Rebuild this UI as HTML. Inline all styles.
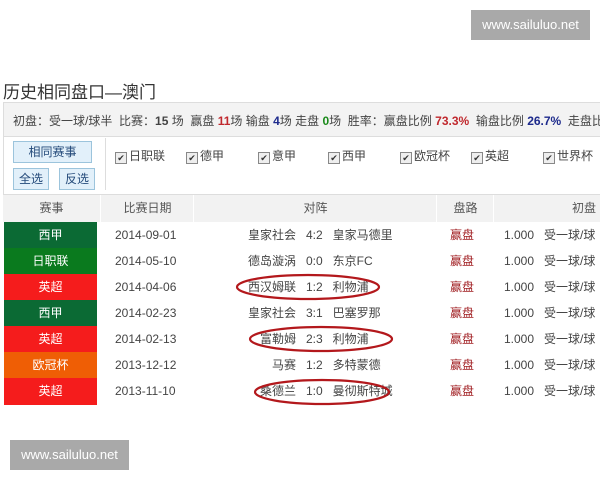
<!DOCTYPE html>
<html><head><meta charset="utf-8"><style>
body{margin:0;width:600px;height:480px;background:#fff;position:relative;overflow:hidden;font-family:"Liberation Sans","Noto Sans CJK SC",sans-serif;font-size:12px;color:#444}
.a{position:absolute;white-space:nowrap}
.wm{position:absolute;background:#a9a9a9;color:#fff;font-size:13px;line-height:30px;text-align:center;width:119px;height:30px}
.btn{position:absolute;border:1px solid #9cc4dc;background:#e2f0fa;color:#244a7a;text-align:center;line-height:20px;box-sizing:border-box}
.cb{position:absolute;top:147px;font-size:12px}
.cb i{display:inline-block;width:10px;height:10px;border:1px solid #888;background:#eee;vertical-align:-1px;margin-right:2px;font-style:normal;font-size:9px;line-height:10px;text-align:center;color:#333}
.row{position:absolute;left:3px;width:597px;height:26px;border-bottom:1px solid #e4e4e4;background:#fff}
.lg{position:absolute;left:1px;top:0;width:93px;height:26px;color:#fff;text-align:center;line-height:26px;font-weight:normal}
.c{position:absolute;top:0;line-height:26px}
</style></head><body>
<div class="a" style="left:3px;top:78px;font-size:17px;color:#333">历史相同盘口—澳门</div>
<div class="a" style="left:3px;top:102px;width:597px;height:33px;background:#f3f3f3;border-top:1px solid #ddd;border-left:1px solid #ddd;border-bottom:1px solid #ddd"></div>
<div class="a" style="left:13px;top:112px">初盘：受一球/球半 &nbsp;比赛：<b>15</b> 场 &nbsp;赢盘 <b style="color:#c0282d">11</b>场 输盘 <b style="color:#1d2a8c">4</b>场 走盘 <b style="color:#1a8a1a">0</b>场 &nbsp;胜率：赢盘比例 <b style="color:#c0282d">73.3%</b> &nbsp;输盘比例 <b style="color:#1d2a8c">26.7%</b> &nbsp;走盘比例</div>
<div class="a" style="left:3px;top:136px;width:597px;height:58px;border-left:1px solid #ddd"></div>
<div class="btn" style="left:13px;top:141px;width:79px;height:22px">相同赛事</div>
<div class="btn" style="left:13px;top:168px;width:36px;height:22px">全选</div>
<div class="btn" style="left:59px;top:168px;width:36px;height:22px">反选</div>
<div class="a" style="left:105px;top:138px;width:1px;height:52px;background:#ddd"></div>
<div class="cb" style="left:115px"><i>✔</i>日职联</div>
<div class="cb" style="left:186px"><i>✔</i>德甲</div>
<div class="cb" style="left:258px"><i>✔</i>意甲</div>
<div class="cb" style="left:328px"><i>✔</i>西甲</div>
<div class="cb" style="left:400px"><i>✔</i>欧冠杯</div>
<div class="cb" style="left:471px"><i>✔</i>英超</div>
<div class="cb" style="left:543px"><i>✔</i>世界杯</div>
<div class="a" style="left:3px;top:194px;width:597px;height:27px;background:#f2f2f2;border-top:1px solid #ddd;color:#555;line-height:27px">
<div class="c" style="left:0;width:97px;text-align:center;line-height:27px">赛事</div>
<div class="c" style="left:97px;width:93px;text-align:center;border-left:1px solid #fff;line-height:27px">比赛日期</div>
<div class="c" style="left:190px;width:243px;text-align:center;border-left:1px solid #fff;line-height:27px">对阵</div>
<div class="c" style="left:433px;width:57px;text-align:center;border-left:1px solid #fff;line-height:27px">盘路</div>
<div class="c" style="left:490px;width:180px;text-align:center;border-left:1px solid #fff;line-height:27px">初盘</div>
</div>
<div class="row" style="top:222px"><div class="lg" style="background:#0b6a34">西甲</div><div class="c" style="left:112px">2014-09-01</div><div class="c" style="left:245px">皇家社会 &nbsp; 4:2 &nbsp; 皇家马德里</div><div class="c" style="left:447px;color:#a01e22">赢盘</div><div class="c" style="left:501px">1.000 &nbsp; 受一球/球</div></div>
<div class="row" style="top:248px"><div class="lg" style="background:#0a7a1e">日职联</div><div class="c" style="left:112px">2014-05-10</div><div class="c" style="left:245px">德岛漩涡 &nbsp; 0:0 &nbsp; 东京FC</div><div class="c" style="left:447px;color:#a01e22">赢盘</div><div class="c" style="left:501px">1.000 &nbsp; 受一球/球</div></div>
<div class="row" style="top:274px"><div class="lg" style="background:#f51c1c">英超</div><div class="c" style="left:112px">2014-04-06</div><div class="c" style="left:245px">西汉姆联 &nbsp; 1:2 &nbsp; 利物浦</div><div class="c" style="left:447px;color:#a01e22">赢盘</div><div class="c" style="left:501px">1.000 &nbsp; 受一球/球</div></div>
<div class="row" style="top:300px"><div class="lg" style="background:#0b6a34">西甲</div><div class="c" style="left:112px">2014-02-23</div><div class="c" style="left:245px">皇家社会 &nbsp; 3:1 &nbsp; 巴塞罗那</div><div class="c" style="left:447px;color:#a01e22">赢盘</div><div class="c" style="left:501px">1.000 &nbsp; 受一球/球</div></div>
<div class="row" style="top:326px"><div class="lg" style="background:#f51c1c">英超</div><div class="c" style="left:112px">2014-02-13</div><div class="c" style="left:257px">富勒姆 &nbsp; 2:3 &nbsp; 利物浦</div><div class="c" style="left:447px;color:#a01e22">赢盘</div><div class="c" style="left:501px">1.000 &nbsp; 受一球/球</div></div>
<div class="row" style="top:352px"><div class="lg" style="background:#ef5e05">欧冠杯</div><div class="c" style="left:112px">2013-12-12</div><div class="c" style="left:269px">马赛 &nbsp; 1:2 &nbsp; 多特蒙德</div><div class="c" style="left:447px;color:#a01e22">赢盘</div><div class="c" style="left:501px">1.000 &nbsp; 受一球/球</div></div>
<div class="row" style="top:378px;border:none;height:27px"><div class="lg" style="background:#f51c1c;height:27px">英超</div><div class="c" style="left:112px">2013-11-10</div><div class="c" style="left:257px">桑德兰 &nbsp; 1:0 &nbsp; 曼彻斯特城</div><div class="c" style="left:447px;color:#a01e22">赢盘</div><div class="c" style="left:501px">1.000 &nbsp; 受一球/球</div></div>
<div class="a" style="left:0;top:405px;width:600px;height:75px;background:#fff"></div>
<svg class="a" style="left:0;top:0" width="600" height="480"><g fill="none" stroke="#b3181c" stroke-width="2.2">
<ellipse cx="308" cy="287" rx="71" ry="12"/>
<ellipse cx="321" cy="339" rx="71" ry="12"/>
<ellipse cx="322" cy="392" rx="67" ry="12"/>
</g></svg>
<div class="wm" style="left:471px;top:10px">www.sailuluo.net</div>
<div class="wm" style="left:10px;top:440px">www.sailuluo.net</div>
</body></html>
